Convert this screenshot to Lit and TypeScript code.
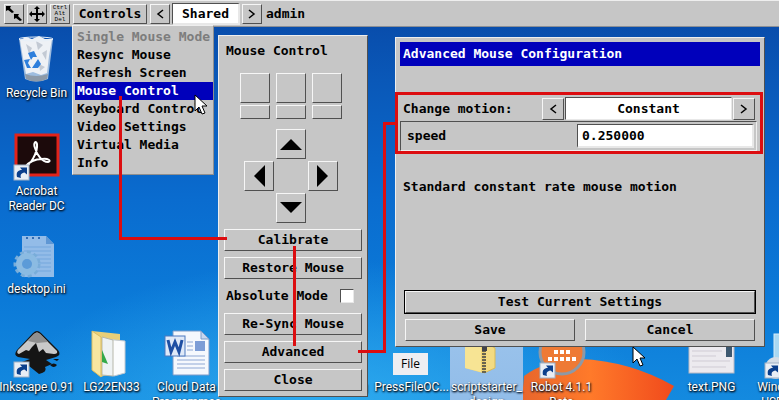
import { LitElement, html, svg, css, nothing } from "lit";
import { customElement } from "lit/decorators.js";
import { classMap } from "lit/directives/class-map.js";

const shortcut = svg`
  <rect x="0" y="33" width="15" height="15" fill="#e9eef5" stroke="#9fb0c4" />
  <path d="M3 45 C2 40 4 38 8 38 L6 35.500 L13 35.500 L13 42.500 L10.500 40.500 C7 41 6 43 7 46 Z" fill="#0b3f8c" />`;

const icons = {
  bin: svg`
    <path d="M7 3 L41 3 L36 43 Q24 48 13 43 Z" fill="#b9cfe6" opacity=".85" />
    <path d="M8 4 L14 1 L20 3 L27 0 L33 3 L40 3 L37 20 L35 37 L29 39 L21 36 L14 38 L11 22 Z" fill="#eef1f5" />
    <path d="M14 8 L20 12 L17 18 Z M24 5 L31 9 L26 14 Z M30 17 L35 14 L34 24 Z M27 28 L33 31 L28 35 Z" fill="#c3cad4" />
    <path d="M16 17 l6 -2 l3 6 l-4 0 l-2 3 z M12 24 l6 -1 l-2 4 l3 5 l-4 0 z M22 29 l4 -6 l3 5 l-3 4 l-6 0 z" fill="#2e7fdc" />
    <path d="M13 38 Q24 42 36 38 L35 43 Q24 48 14 43 Z" fill="#8d9aa8" />
    <ellipse cx="24" cy="3" rx="17" ry="2" fill="none" stroke="#e8f0f8" />`,
  acrobat: svg`
    <rect x="4" y="1" width="42" height="40" fill="#1c0a0b" stroke="#e2231a" stroke-width="3" />
    <path d="M13 33 C18 31 26 19 25 10 C24 6 21 9 23 14 C25 21 30 28 36 28 C40 27 36 24 30 25 C23 25 17 28 13 33 Z" fill="none" stroke="#fff" stroke-width="2" />
    <g transform="translate(2 -2)">${shortcut}</g>`,
  ini: svg`
    <g transform="translate(0 3)">
      <path d="M10 1 L34 1 L42 9 L42 42 L10 42 Z" fill="#93bce8" />
      <path d="M34 1 L34 9 L42 9 Z" fill="#5f97d4" />
      <path d="M12 12h27M12 16h27M12 20h27M12 24h27M12 28h27M12 32h27M12 36h27" stroke="#75a7dd" />
      <path d="M14 3h2M20 3h2M26 3h2" stroke="#2f6bb3" stroke-width="2" />
      <circle cx="15" cy="29" r="12" fill="none" stroke="#79add9" stroke-width="3" stroke-dasharray="4 3" />
      <circle cx="15" cy="29" r="8" fill="none" stroke="#8bbbe2" stroke-width="6" />
      <circle cx="15" cy="29" r="5" fill="#5c9bd8" />
    </g>`,
  inkscape: svg`
    <path d="M21 3 Q25 -1 29 3 L46 20 Q50 25 44 27 L34 30 L40 34 L33 37 Q36 42 27 44 Q22 40 17 36 L10 32 L18 29 L6 27 Q1 25 5 20 Z" fill="#151515" />
    <path d="M22 4 Q25 1 28 4 L45 21 Q46 24 42 24 L34 23 L31 19 L27 22 L24 13 L20 17 L17 21 L14 20 L7 24 Q4 23 6 20 Z" fill="#c9c9c9" />
    <path d="M22 4 Q25 1 28 4 L36 12 L25 13 L16 11 Z" fill="#8f8f8f" />
    <path d="M38 35 q4 -3 7 0 q-3 4 -7 0 Z M41 29 h6 l-2 2 Z" fill="#111" />
    <g transform="translate(2 -1)">${shortcut}</g>`,
  folder: svg`
    <path d="M5 1 L33 4 L33 39 L14 47 L5 40 Z" fill="#e9cf78" />
    <path d="M18 9 L38 11 L38 43 L27 46 L18 44 Z" fill="#fbfcfd" stroke="#c3cad1" />
    <path d="M15 7 L26 10 L26 46 L15 45 Z" fill="#eef2f3" stroke="#b7b7aa" />
    <path d="M15 20 L21 34 L15 32 Z" fill="#35a948" />
    <path d="M5 1 L14 7 L14 47 L5 40 Z" fill="#f8e6a0" stroke="#d9bd62" />`,
  word: svg`
    <path d="M11 1 L39 1 L47 9 L47 45 L11 45 Z" fill="#f5f8fd" stroke="#7d9bc9" />
    <path d="M39 1 L39 9 L47 9 Z" fill="#c8d7ee" stroke="#7d9bc9" />
    <path d="M25 12h6M25 16h6M25 20h6M15 26h28M15 30h28M15 34h28M15 38h28" stroke="#8fa8d4" />
    <rect x="33" y="11" width="10" height="10" fill="#7d9dd6" />
    <rect x="3" y="6" width="20" height="20" fill="#dfe9f8" stroke="#4d79bf" />
    <path d="M6 10 L9 22 L13 12 L17 22 L20 10" fill="none" stroke="#1f4fa3" stroke-width="3" />`,
  zip: svg`
    <path d="M3 2 L21 0 L31 4 L31 38 L21 43 L3 38 Z" fill="#f1d675" />
    <path d="M3 8 L19 10 L19 42 L3 38 Z" fill="#f7e494" />
    <path d="M22 12 L33 18 L33 38 L22 43 Z" fill="#f3db82" stroke="#d9bb59" />
    <path d="M22 2 V44" stroke="#6a6550" stroke-width="4" stroke-dasharray="2 1" />
    <rect x="20" y="12" width="5" height="9" fill="#40424a" />`,
  robot: svg`
    <circle cx="25" cy="22" r="22" fill="#ee7a35" stroke="#8d99a6" stroke-width="3" />
    <path d="M17 22h18M11 29h30" stroke="#fff" stroke-width="4" stroke-dasharray="4 2" />
    <g transform="translate(3 0)">${shortcut}</g>`,
  png: svg`
    <rect x="2" y="8" width="45" height="35" fill="#eceaef" stroke="#b9b9c4" />
    <path d="M5 21h30M5 26h24M5 31h38M5 37h34" stroke="#cfcbd4" />
    <rect x="39" y="16" width="6" height="11" fill="#3d5870" />`,
  drive: svg`
    <rect x="12" y="4" width="32" height="34" fill="#a9d8f2" stroke="#d6ecf8" />
    <circle cx="14" cy="38" r="11" fill="#d5dde6" />
    <g transform="translate(3 0)">${shortcut}</g>`,
};

interface Shortcut { icon?: keyof typeof icons; lines: string[]; col: number; row: number; selected?: boolean }

const shortcuts: Shortcut[] = [
  { icon: "bin", lines: ["Recycle Bin"], col: 1, row: 1 },
  { icon: "acrobat", lines: ["Acrobat", "Reader DC"], col: 1, row: 2 },
  { icon: "ini", lines: ["desktop.ini"], col: 1, row: 3 },
  { icon: "inkscape", lines: ["Inkscape 0.91"], col: 1, row: 4 },
  { icon: "folder", lines: ["LG22EN33"], col: 2, row: 4 },
  { icon: "word", lines: ["Cloud Data", "Programmes"], col: 3, row: 4 },
  { lines: ["Configuring"], col: 5, row: 4 },
  { lines: ["PressFileOC..."], col: 6, row: 4 },
  { icon: "zip", lines: ["scriptstarter_", "design"], col: 7, row: 4, selected: true },
  { icon: "robot", lines: ["Robot 4.1.1", "Beta"], col: 8, row: 4 },
  { icon: "png", lines: ["text.PNG"], col: 10, row: 4 },
  { icon: "drive", lines: ["Windows 7", "USB/DVD"], col: 11, row: 4 },
];

@customElement("desktop-icons")
class DesktopIcons extends LitElement {
  static styles = css`
    :host { display: grid; grid-template-columns: repeat(11, 75px); grid-auto-rows: 98px; padding-top: 27px; }
    .item { display: flex; flex-direction: column; align-items: center; padding-top: 9px; margin-right: 2px; }
    .selected { background: linear-gradient(#9cc4ec, #8fbbe8); }
    svg { flex: none; width: 50px; height: 48px; overflow: visible; }
    .label { margin-top: 2px; font: 12px/15px Roboto, "Open Sans", sans-serif; color: #fff; white-space: nowrap; text-align: center; text-shadow: 1px 1px 2px #000, 0 1px 2px #001d40; }
  `;
  render() {
    return shortcuts.map((s) => html`
      <div class=${classMap({ item: true, selected: !!s.selected })} style="grid-area: ${s.row} / ${s.col}">
        <svg viewBox="0 0 50 48" aria-hidden="true">${s.icon ? icons[s.icon] : nothing}</svg>
        <div class="label">${s.lines.map((l, i) => html`${i ? html`<br />` : nothing}${l}`)}</div>
      </div>`);
  }
}

const raised = css`
  * { box-sizing: border-box; }
  button { font: inherit; color: #000; background: #c6c6c6; border: 1px solid; border-color: #f6f6f6 #505050 #505050 #f6f6f6; padding: 0; margin: 0; white-space: nowrap; }
  input, output { font: inherit; color: #000; background: #fff; border: 1px solid; border-color: #505050 #e8e8e8 #e8e8e8 #505050; }
`;

@customElement("viewer-toolbar")
class ViewerToolbar extends LitElement {
  static styles = [raised, css`
    :host { display: flex; align-items: center; gap: 3px; height: 27px; padding: 1px 4px 0; box-sizing: border-box; background: #c6c6c6; border-top: 1px solid #eee; border-bottom: 1px solid #8b8f96; }
    button { display: flex; align-items: center; justify-content: center; width: 20px; height: 20px; }
    .menu { width: 74px; }
    .keys { font: 6px/6px "Liberation Mono", monospace; white-space: pre; }
    output { display: flex; align-items: center; justify-content: center; width: 68px; height: 22px; margin: 0 -1px; border-width: 1px 2px 2px 1px; }
    .user { margin-left: 1px; }
  `];
  render() {
    return html`
      <button aria-label="Scale"><svg width="18" height="18" viewBox="0 0 18 18"><path d="M1 1 H6 L5 3 L9 7 L7 8 L3 5 L1 6 Z M9 9 H14 L13 11 L17 15 L15 16 L11 13 L9 14 Z" /></svg></button>
      <button aria-label="Move"><svg width="18" height="18" viewBox="0 0 18 18"><path d="M9 1 L12 4 H10 V8 H14 V6 L17 9 L14 12 V10 H10 V14 H12 L9 17 L6 14 H8 V10 H4 V12 L1 9 L4 6 V8 H8 V4 H6 Z" /></svg></button>
      <button class="keys">Ctrl
Alt
Del</button>
      <button class="menu">Controls</button>
      <button aria-label="Previous"><svg width="8" height="10"><path d="M7 1 L2 5 L7 9" fill="none" stroke="#000" stroke-width="1.500" /></svg></button>
      <output>Shared</output>
      <button aria-label="Next"><svg width="8" height="10"><path d="M1 1 L6 5 L1 9" fill="none" stroke="#000" stroke-width="1.500" /></svg></button>
      <span class="user">admin</span>`;
  }
}

@customElement("controls-menu")
class ControlsMenu extends LitElement {
  static styles = [raised, css`
    :host { display: flex; flex-direction: column; box-sizing: border-box; padding: 2px 0 2px 2px; background: #c6c6c6; border: 1px solid; border-color: #eee #8f8f8f #8f8f8f #eee; }
    button { height: 18px; border: 0; padding: 0 2px; text-align: left; line-height: 18px; }
    .active { background: #0000bb; color: #fff; }
    button:disabled { color: #7d7d7d; }
  `];
  render() {
    return ["Single Mouse Mode", "Resync Mouse", "Refresh Screen", "Mouse Control", "Keyboard Control", "Video Settings", "Virtual Media", "Info"]
      .map((t, i) => html`<button class=${classMap({ active: i === 3 })} ?disabled=${i === 0}>${t}</button>`);
  }
}

@customElement("mouse-control")
class MouseControl extends LitElement {
  static styles = [raised, css`
    :host { display: flex; flex-direction: column; gap: 6px; box-sizing: border-box; padding: 6px 5px 5px; background: #c6c6c6; border: 1px solid; border-color: #eee #505050 #505050 #eee; }
    .title { padding-left: 2px; line-height: 18px; }
    .keys { display: grid; grid-template-columns: repeat(3, 30px); grid-template-rows: 30px 14px; gap: 2px 6px; padding: 7px 0 4px 16px; }
    .pad { display: grid; grid-template: repeat(3, 30px) / repeat(3, 30px); gap: 2px; padding-left: 20px; }
    .pad button { display: grid; place-items: center; }
    .up { grid-area: 1 / 2; } .left { grid-area: 2 / 1; } .right { grid-area: 2 / 3; } .down { grid-area: 3 / 2; }
    .wide { height: 22px; }
    .check { display: flex; align-items: center; gap: 10px; height: 22px; padding-left: 2px; white-space: nowrap; }
    .check input { appearance: none; width: 14px; height: 14px; margin: 0; }
    .check span { width: 104px; }
  `];
  arrow(name: string, points: string) {
    return html`<button class=${name} aria-label=${name}><svg width="24" height="24"><polygon points=${points} /></svg></button>`;
  }
  render() {
    return html`
      <div class="title">Mouse Control</div>
      <div class="keys">${[1, 2, 3, 4, 5, 6].map((n) => html`<button aria-label="Mouse button ${n}"></button>`)}</div>
      <div class="pad">
        ${this.arrow("up", "1,18 12,7 23,18")}${this.arrow("left", "7,12 18,1 18,23")}
        ${this.arrow("right", "17,12 6,1 6,23")}${this.arrow("down", "1,6 12,17 23,6")}
      </div>
      <button class="wide">Calibrate</button>
      <button class="wide">Restore Mouse</button>
      <label class="check"><span>Absolute Mode</span><input type="checkbox" /></label>
      <button class="wide">Re-Sync Mouse</button>
      <button class="wide">Advanced</button>
      <button class="wide">Close</button>`;
  }
}

@customElement("advanced-dialog")
class AdvancedDialog extends LitElement {
  static styles = [raised, css`
    :host { display: flex; flex-direction: column; box-sizing: border-box; padding: 4px 4px 5px; background: #c6c6c6; border: 1px solid; border-color: #eee #505050 #505050 #eee; }
    .title { height: 24px; padding: 0 3px; background: #0000bb; color: #fff; line-height: 24px; }
    .motion { display: flex; align-items: center; gap: 1px; margin-top: 31px; padding: 0 5px 0 3px; }
    .motion > span { flex: 1; }
    .motion button { display: grid; place-items: center; width: 22px; height: 22px; }
    .motion output { display: grid; place-items: center; width: 167px; height: 23px; }
    .speed { display: flex; align-items: center; height: 30px; margin: 1px 3px 0 0; padding: 0 2px 0 6px; border: 1px solid; border-color: #505050 #eee #eee #505050; }
    .speed label { flex: 1; }
    .speed input { width: 177px; height: 24px; padding: 0 4px; border-width: 1px 2px 2px 1px; }
    .note { margin: 0; padding: 27px 3px 0; line-height: 18px; }
    .actions { display: grid; grid-template-columns: 1fr 1fr; gap: 5px 10px; margin-top: 94px; padding: 0 5px; }
    .actions button { height: 22px; }
    .actions .test { grid-column: 1 / -1; height: 24px; margin: 0 -1px; outline: 1px solid #000; outline-offset: -1px; border-width: 2px; }
  `];
  render() {
    return html`
      <div class="title">Advanced Mouse Configuration</div>
      <div class="motion">
        <span>Change motion:</span>
        <button aria-label="Previous"><svg width="8" height="10"><path d="M7 1 L2 5 L7 9" fill="none" stroke="#000" stroke-width="1.500" /></svg></button>
        <output>Constant</output>
        <button aria-label="Next"><svg width="8" height="10"><path d="M1 1 L6 5 L1 9" fill="none" stroke="#000" stroke-width="1.500" /></svg></button>
      </div>
      <div class="speed"><label for="speed">speed</label><input id="speed" type="text" value="0.250000" /></div>
      <p class="note">Standard constant rate mouse motion</p>
      <div class="actions">
        <button class="test">Test Current Settings</button>
        <button>Save</button>
        <button>Cancel</button>
      </div>`;
  }
}

@customElement("app-root")
class AppRoot extends LitElement {
  static styles = css`
    :host { display: block; position: relative; height: 100vh; overflow: hidden; font: bold 13px/18px "DejaVu Sans Mono", "Liberation Mono", monospace; color: #000;
      background: linear-gradient(#0848a6 0, #0a58b8 20%, #0a6ccf 50%, #0b7ad8 75%, #148adf 100%); }
    .art, .marks { position: absolute; top: 0; left: 0; width: 100%; height: 100%; overflow: hidden; pointer-events: none; }
    desktop-icons { position: absolute; top: 0; left: 0; }
    viewer-toolbar { position: relative; }
    controls-menu { position: absolute; left: 72px; top: 25px; width: 142px; }
    mouse-control { position: absolute; left: 218px; top: 35px; width: 150px; }
    advanced-dialog { position: absolute; left: 395px; top: 37px; width: 370px; }
    .tip { position: absolute; left: 393px; top: 353px; padding: 2px 8px; background: #eeeef2; font: 12px/18px "Open Sans", sans-serif; }
  `;
  render() {
    const pointer = "0,0 0,16 4,12 7,19 10,18 7,11 12,11";
    return html`
      <svg class="art" aria-hidden="true">
        <defs>
          <radialGradient id="glow"><stop offset="0" stop-color="#35b4f4" stop-opacity=".8" /><stop offset="1" stop-color="#35b4f4" stop-opacity="0" /></radialGradient>
          <linearGradient id="flag" x2="1"><stop offset="0" stop-color="#e8662c" /><stop offset=".45" stop-color="#ff7a2a" /><stop offset="1" stop-color="#f04a1c" /></linearGradient>
        </defs>
        <ellipse cx="330" cy="410" rx="320" ry="150" fill="url(#glow)" />
        <path d="M522 400 L524 376 Q545 360 580 359 Q630 361 674 386 L666 400 Z" fill="url(#flag)" />
      </svg>
      <desktop-icons></desktop-icons>
      <viewer-toolbar></viewer-toolbar>
      <controls-menu></controls-menu>
      <mouse-control></mouse-control>
      <advanced-dialog></advanced-dialog>
      <div class="tip">File</div>
      <svg class="marks" aria-hidden="true">
        <g fill="none" stroke="#dc0d10" stroke-width="3">
          <path d="M120.500 96 V238.500 H227" />
          <path d="M294.500 246 V346" />
          <path d="M358 351.500 H384.500 V123.500 H396" />
          <rect x="396.500" y="93.500" width="365" height="59" />
        </g>
        <g fill="#fff" stroke="#000">
          <polygon points=${pointer} transform="translate(195 95)" />
          <polygon points=${pointer} transform="translate(633 347)" />
        </g>
      </svg>`;
  }
}
